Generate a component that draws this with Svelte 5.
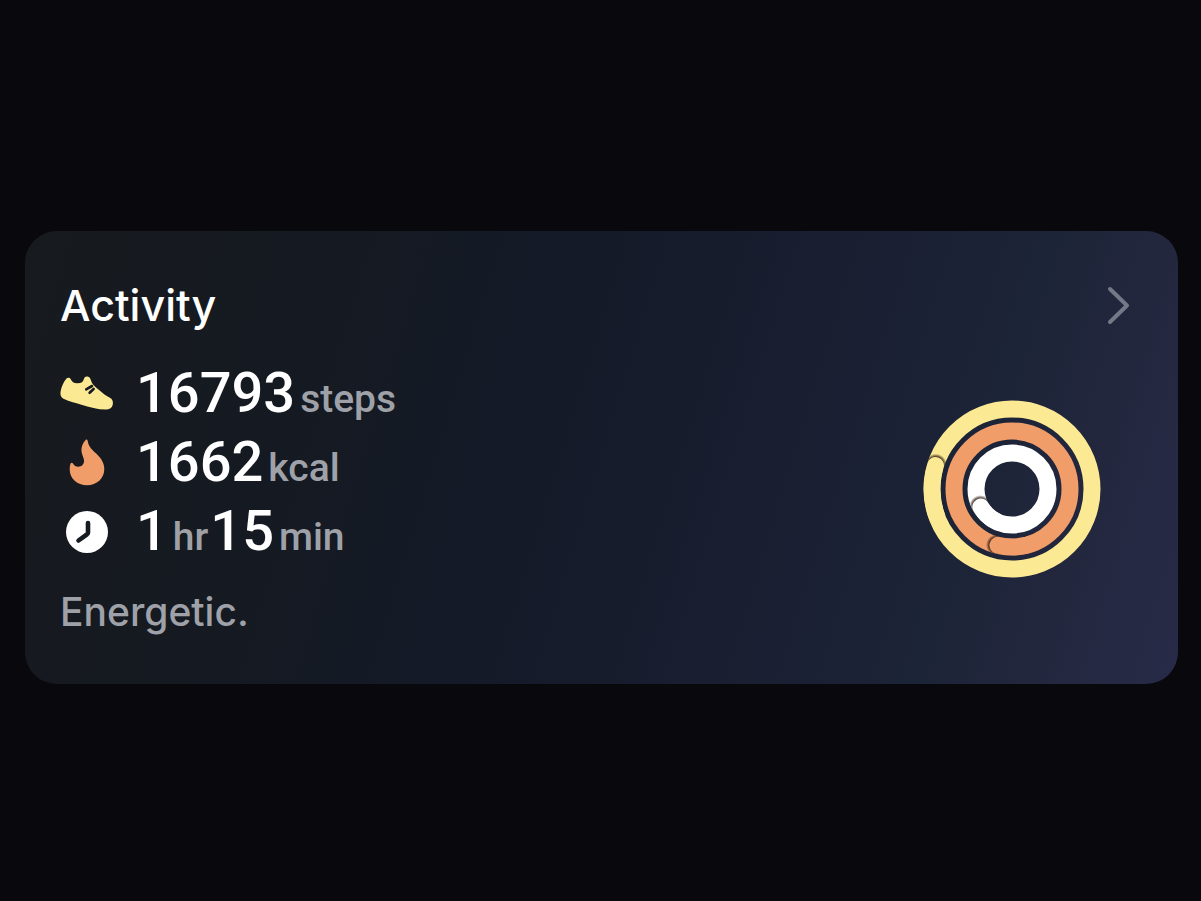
<script lang="ts">
	type Part = { value: string; unit: string };

	const stats: { icon: string; parts: Part[] }[] = [
		{ icon: 'shoe', parts: [{ value: '16793', unit: 'steps' }] },
		{ icon: 'flame', parts: [{ value: '1662', unit: 'kcal' }] },
		{
			icon: 'clock',
			parts: [
				{ value: '1', unit: 'hr' },
				{ value: '15', unit: 'min' }
			]
		}
	];

	// angle = where the second lap currently ends, clockwise from 12
	const rings = [
		{ radius: 80, color: '#fbe993', angle: 287 },
		{ radius: 58, color: '#f19d69', angle: 194 },
		{ radius: 36, color: '#ffffff', angle: 240 }
	];

	const band = 17;

	function circlePath(r: number) {
		return `M${-r} 0a${r} ${r} 0 1 0 ${2 * r} 0a${r} ${r} 0 1 0 ${-2 * r} 0Z`;
	}

	function ringPath(r: number) {
		return circlePath(r + band / 2) + circlePath(r - band / 2);
	}

	// short tail behind the rounded tip, hides the back half of the shadow
	function tailPath(r: number) {
		const a = Math.PI / 5;
		return `M${-r * Math.sin(a)} ${-r * Math.cos(a)}A${r} ${r} 0 0 1 0 ${-r}`;
	}
</script>

<main>
	<section class="card" aria-labelledby="activity-title">
		<header>
			<h2 id="activity-title">Activity</h2>
			<button class="more" aria-label="Open activity">
				<svg width="24" height="40" viewBox="0 0 24 40">
					<path d="M4 4 21 20.500 4 37" />
				</svg>
			</button>
		</header>

		<div class="body">
			<div class="summary">
				<ul>
					{#each stats as stat}
						<li>
							<span class="icon">
								{#if stat.icon === 'shoe'}
									<svg width="54" height="36" viewBox="0 0 54 36">
										<path
											fill="#fbe993"
											d="M6.500 2.600C7.500 1.200 9.800 1.300 10.600 3C11.800 5.800 13.800 7.300 17 7.300C20.500 7.500 22.900 6.500 23.700 3.500C24.200 1.200 25.600 .3 27.500 .6C29.500 1 30.400 2.500 31 4.500C31.700 7 33.200 9 35.700 11.300L44.500 18.500C46 19.700 47.500 20.600 49.500 21.600C52.500 23.200 53.300 25.500 52.800 28.500C52.200 32 49.500 33.600 45.500 33.500C38 33.500 29 31.300 21.500 28.700C15 26.700 8.500 25.300 3.500 22.800C.8 21.400 0 18.800 .6 15.500C1.500 10.500 3.500 6.300 6.500 2.600Z"
										/>
										<path
											fill="none"
											stroke="#161a22"
											stroke-width="2.600"
											stroke-linecap="round"
											d="M26.200 13.300 32 10M29.600 16.800 33.600 13"
										/>
									</svg>
								{:else if stat.icon === 'flame'}
									<svg width="36" height="48" viewBox="0 0 36 48">
										<path
											fill="#f19d69"
											d="M16.600 1C17.300 .2 18.400 .6 18.600 1.600C19.400 6.500 21.500 9.600 26 13.500C31.500 18.300 35.300 23.500 35.300 30C35.300 39.500 27.800 46.200 18 46.200C8.300 46.200 .7 39.600 .7 30.500C.7 28.300 1 26 1.600 24.500C2.200 23.300 3.300 23.400 4 24.500C5.300 26.800 7 27.700 9.200 27.700C12.800 27.700 15.200 25.200 15 21.500C14.800 18.500 12.800 15.800 12.500 12C12.200 8 13.600 4.200 16.600 1Z"
										/>
									</svg>
								{:else}
									<svg width="42" height="42" viewBox="0 0 42 42">
										<circle cx="21" cy="21" r="21" fill="#fff" />
										<path
											fill="none"
											stroke="#161a22"
											stroke-width="4.600"
											stroke-linecap="round"
											stroke-linejoin="round"
											d="M22 12V21.500Q22 22.500 21 23.300L12.500 29.500"
										/>
									</svg>
								{/if}
							</span>
							<span class="reading">
								{#each stat.parts as part}
									<span class="part">
										<span class="value">{part.value}</span>
										<span class="unit">{part.unit}</span>
									</span>
								{/each}
							</span>
						</li>
					{/each}
				</ul>
				<p>Energetic.</p>
			</div>

			<svg class="rings" width="178" height="178" viewBox="-89 -89 178 178" role="img" aria-label="Activity rings">
				<defs>
					<radialGradient id="tip-shadow">
						<stop offset="0.740" stop-color="#2a1810" stop-opacity="0.750" />
						<stop offset="1" stop-color="#2a1810" stop-opacity="0" />
					</radialGradient>
				</defs>
				{#each rings as ring, i}
					<clipPath id="band-{i}">
						<path d={ringPath(ring.radius)} clip-rule="evenodd" />
					</clipPath>
					<circle r={ring.radius} fill="none" stroke={ring.color} stroke-width={band} />
					<g transform="rotate({ring.angle})" clip-path="url(#band-{i})">
						<circle cx="1" cy={-ring.radius} r="11" fill="url(#tip-shadow)" />
						<path
							d={tailPath(ring.radius)}
							fill="none"
							stroke={ring.color}
							stroke-width={band}
							stroke-linecap="round"
						/>
					</g>
				{/each}
			</svg>
		</div>
	</section>
</main>

<style>
	:global(body) {
		margin: 0;
		background: #08080d;
	}

	main {
		box-sizing: border-box;
		min-height: 100vh;
		display: flex;
		align-items: center;
		padding: 14px 23px 0 25px;
		font-family: Roboto, sans-serif;
		color: #fff;
	}

	.card {
		flex: 1;
		padding: 50px 48px 48px 35px;
		border-radius: 32px;
		background: linear-gradient(
			107deg,
			#171a1e 0%,
			#151a22 25%,
			#141a28 45%,
			#1a1f32 66%,
			#1c2437 80%,
			#23273e 89%,
			#282b48 100%
		);
	}

	header {
		display: flex;
		align-items: center;
		justify-content: space-between;
	}

	h2 {
		margin: 0;
		font-family: Inter, sans-serif;
		font-size: 43px;
		font-weight: 500;
		line-height: 48px;
	}

	.more {
		display: flex;
		padding: 0;
		border: 0;
		background: none;
		cursor: pointer;
	}

	.more path {
		fill: none;
		stroke: #747988;
		stroke-width: 4;
		stroke-linecap: round;
		stroke-linejoin: round;
	}

	.body {
		display: flex;
		align-items: center;
		justify-content: space-between;
		padding-right: 29px;
	}

	ul {
		margin: 30px 0 22px;
		padding: 0;
		list-style: none;
	}

	li {
		display: flex;
		align-items: center;
		gap: 22px;
		height: 69px;
	}

	.icon {
		display: flex;
		justify-content: center;
		width: 54px;
	}

	.reading {
		display: flex;
		gap: 2px;
		font-weight: 500;
	}

	.part {
		display: flex;
		align-items: baseline;
		gap: 5px;
	}

	.value {
		font-size: 56px;
		line-height: 69px;
	}

	.unit {
		font-size: 39px;
		line-height: 40px;
		color: #9fa1a8;
	}

	.rings {
		margin-top: 12px;
	}

	p {
		margin: 0;
		font-family: Inter, sans-serif;
		font-size: 39px;
		font-weight: 500;
		line-height: 48px;
		color: #9fa1a8;
	}
</style>
